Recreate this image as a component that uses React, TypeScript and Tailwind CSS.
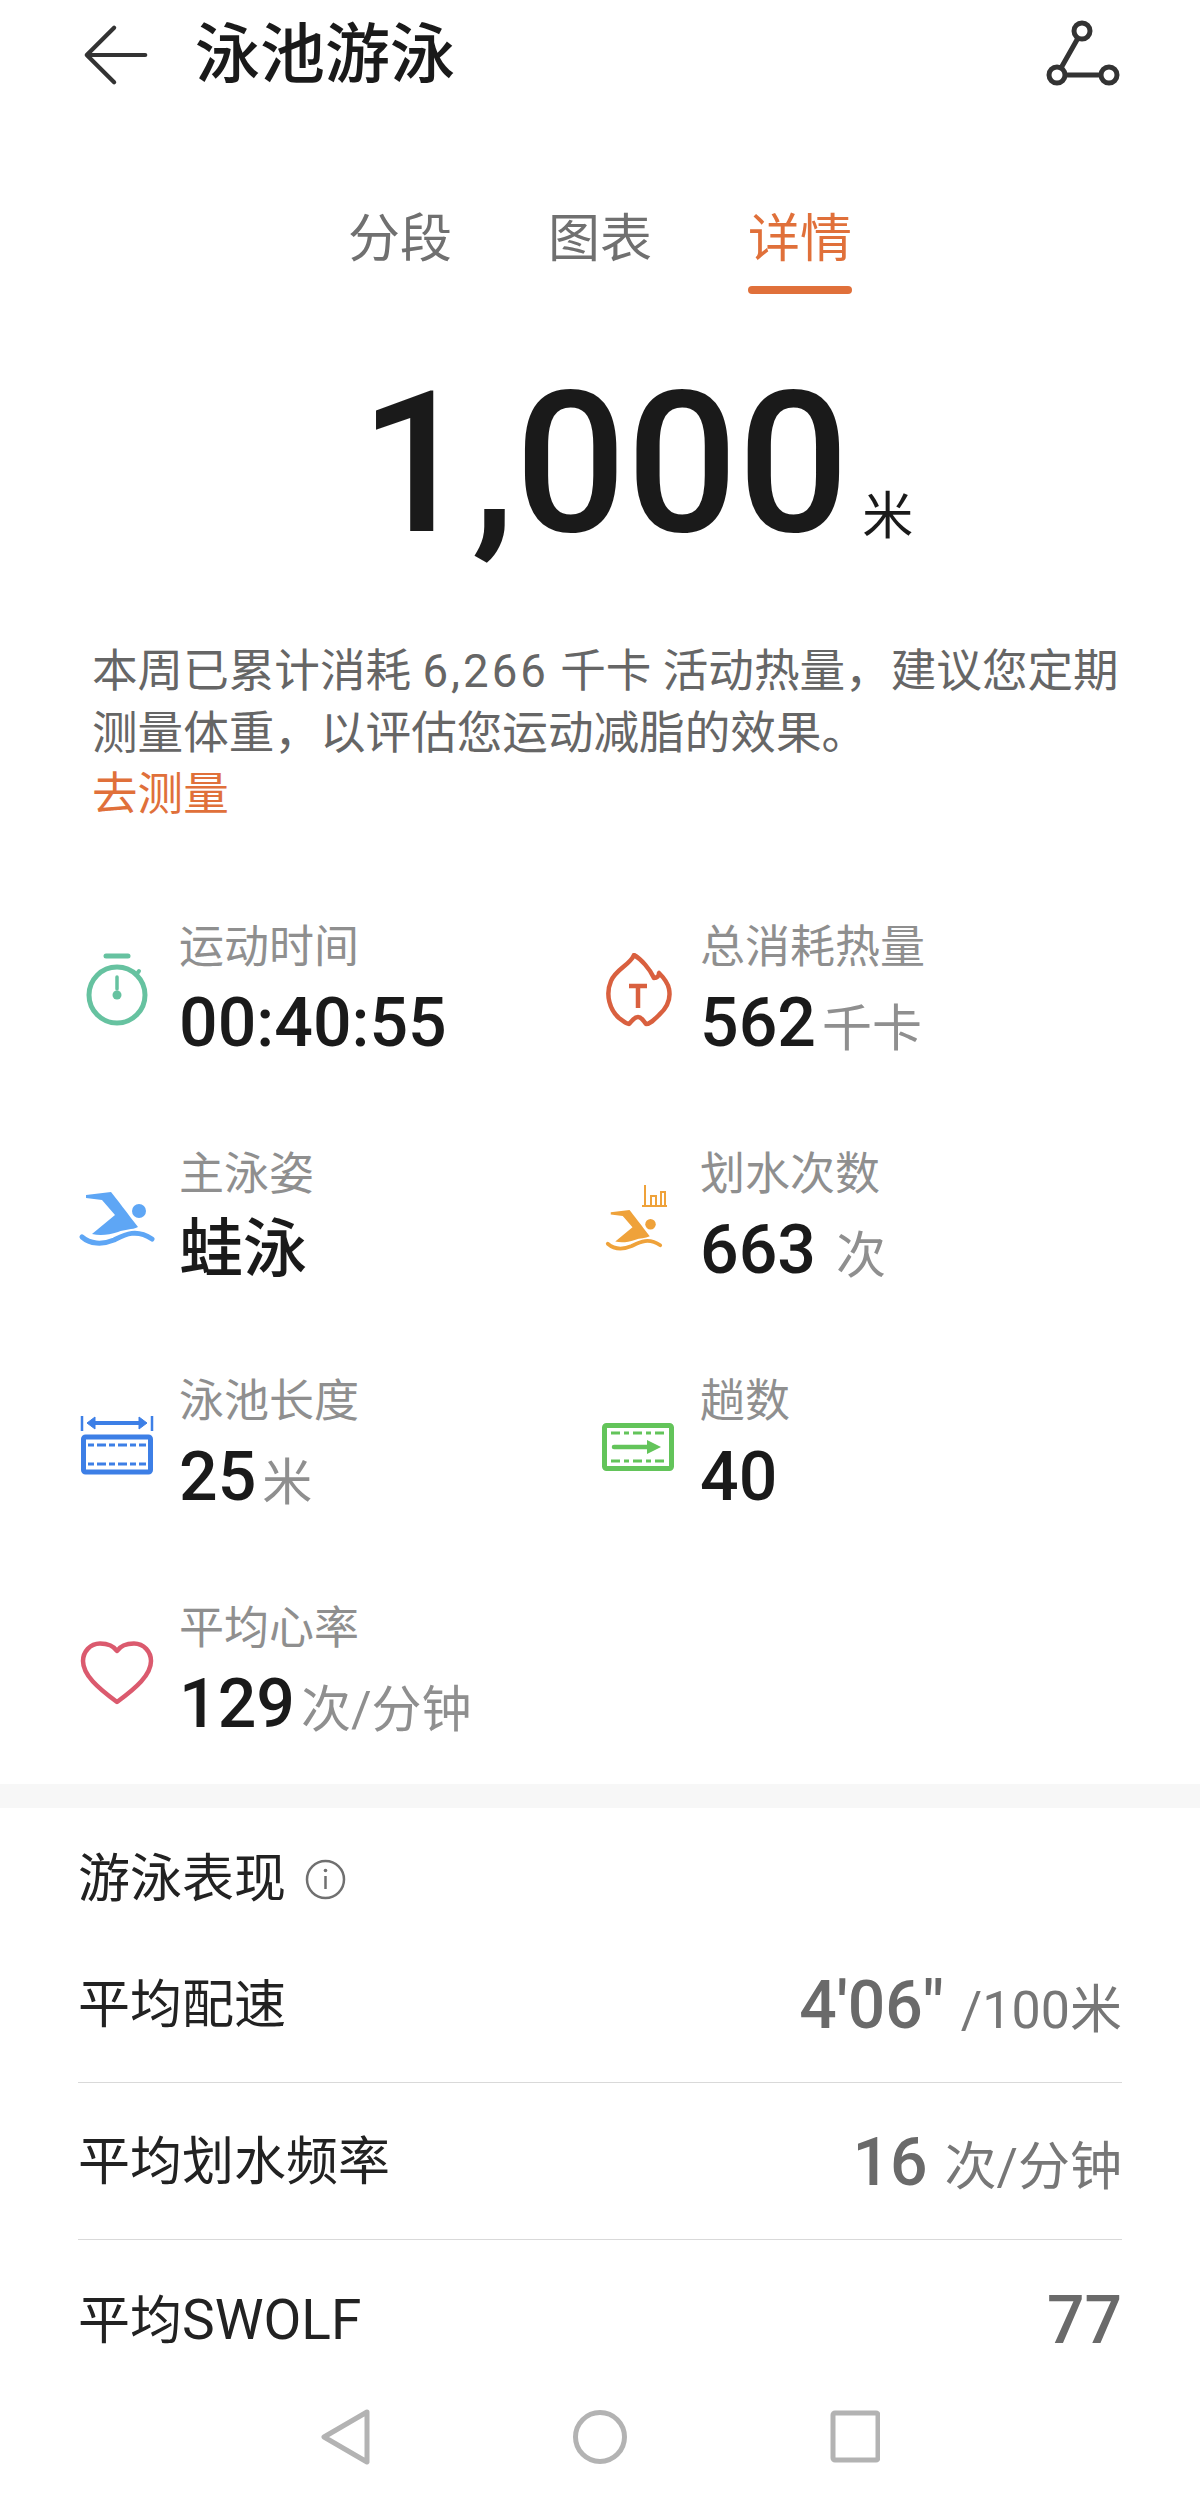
const CJK = "font-['Roboto','Noto_Sans_CJK_SC',sans-serif]";

function Stopwatch() {
  return (
    <svg width="78" height="80" viewBox="0 0 78 80" fill="none" stroke="#66c2a0" strokeWidth="5" strokeLinecap="round">
      <path d="M28 3H50" strokeWidth="5" />
      <circle cx="39" cy="42" r="28" />
      <path d="M58 22L61 18" strokeWidth="4" />
      <path d="M39 24V36" strokeWidth="3.5" />
      <circle cx="39" cy="42" r="4.5" fill="#66c2a0" stroke="none" />
    </svg>
  );
}
function Flame() {
  return (
    <svg width="78" height="80" viewBox="0 0 78 80" fill="none" stroke="#d9603f" strokeWidth="4.5" strokeLinejoin="round">
      <path d="M35 2C31 12 17 16 12 28C6 42 11 57 20 65C24 68 27 71 30 71C33 68 35 64 39 64C43 64 45 69 47 71C51 71 55 67 60 62C69 54 72 46 70 36C69 30 65 25 60 20C60 23 58 25 55 25C51 16 42 6 35 2Z" />
      <path d="M30 33H48M39 33V55" strokeWidth="4.5" />
    </svg>
  );
}
function SwimmerShape({ color, wave }: { color: string; wave: number }) {
  return (
    <>
      <path d="M8 15L33 12C38 18 50 34 60 47C54 50 47 49 40 52C31 55 22 56 14 54L37 35L24 20L8 18Z" fill={color} />
      <circle cx="61" cy="31" r="7" fill={color} />
      <path d="M4 57C12 64 24 65 36 60C46 55 58 48 74 59" stroke={color} strokeWidth={wave} strokeLinecap="round" fill="none" />
    </>
  );
}
function SwimBlue() {
  return (
    <svg width="78" height="80" viewBox="0 0 78 80">
      <SwimmerShape color="#5ea6f5" wave={5} />
    </svg>
  );
}
function SwimOrange() {
  return (
    <svg width="78" height="80" viewBox="0 0 78 80">
      <g transform="translate(5.75 21) scale(.75)">
        <SwimmerShape color="#efa23a" wave={5} />
      </g>
      <path d="M43 26H68M46 26V5M52 26V16H57V26M62 26V12H66V26" stroke="#efa23a" strokeWidth="2" fill="none" />
    </svg>
  );
}
function Pool() {
  return (
    <svg width="78" height="80" viewBox="0 0 78 80" fill="none" stroke="#3d7fe6">
      <path d="M4 9V24M74 9V24" strokeWidth="2.5" />
      <path d="M14 16H64" strokeWidth="4" />
      <path d="M9 16L17 10V22ZM69 16L61 10V22Z" fill="#3d7fe6" strokeWidth="1" />
      <rect x="5.5" y="30" width="67" height="35" rx="2" strokeWidth="5" />
      <path d="M10 38H68M10 57H68" strokeWidth="3" strokeDasharray="6 3 9 3" />
    </svg>
  );
}
function Laps() {
  return (
    <svg width="78" height="80" viewBox="0 0 78 80" fill="none" stroke="#63c45a">
      <rect x="5.5" y="18.5" width="67" height="43" rx="2" strokeWidth="5" />
      <path d="M12 26H66M12 54H66" strokeWidth="3" strokeDasharray="9 4 5 4" />
      <path d="M15 40H50" strokeWidth="4.5" strokeLinecap="round" />
      <path d="M48 33L62 40L48 47Z" fill="#63c45a" stroke="none" />
    </svg>
  );
}
function Heart() {
  return (
    <svg width="78" height="80" viewBox="0 0 78 80" fill="none" stroke="#db5a6e" strokeWidth="4.5" strokeLinejoin="round">
      <path d="M39 17C35 11 29 9.5 22 9.5C12 9.5 5 18 5 27C5 41 20 54 39 68C58 54 73 41 73 27C73 18 66 9.5 56 9.5C49 9.5 43 11 39 17Z" />
    </svg>
  );
}

function Stat({ icon, label, value, unit, gap = "ml-[6px]", cjk }: { icon: React.ReactNode; label: string; value: string; unit?: string; gap?: string; cjk?: boolean }) {
  return (
    <div className="flex h-[227px] items-center">
      <div className="w-[78px] shrink-0">{icon}</div>
      <div className="ml-[23px] flex flex-col">
        <div className="h-[60px] text-[45px] leading-[60px] text-[#8f8f8f]">{label}</div>
        <div className="flex h-[90px] items-baseline leading-[90px] whitespace-nowrap">
          <span className={cjk ? "text-[64px] font-medium text-[#1a1a1a]" : "text-[68px] font-medium text-[#1a1a1a]"}>{value}</span>
          {unit ? <span className={`${gap} text-[50px] text-[#8f8f8f]`}>{unit}</span> : null}
        </div>
      </div>
    </div>
  );
}

function Row({ label, value, unit, border }: { label: React.ReactNode; value: string; unit?: string; border?: boolean }) {
  return (
    <div className={`flex h-[157px] items-center justify-between pt-[4px] ${border ? "border-b border-[#d9d9d9]" : ""}`}>
      <span className="text-[52px] text-[#222222]">{label}</span>
      <span className="flex items-baseline whitespace-nowrap">
        <span className="text-[66px] font-medium text-[#6a6a6a]">{value}</span>
        {unit ? <span className="ml-[17px] text-[52px] text-[#777777]">{unit}</span> : null}
      </span>
    </div>
  );
}

export default function App() {
  return (
    <div className={`relative h-[2502px] w-[1200px] overflow-hidden bg-white ${CJK}`}>
      <header className="flex h-[110px] items-center justify-between pr-[78px] pl-[83px]">
        <div className="flex items-center">
          <svg width="66" height="62" viewBox="0 0 70 64" fill="none" stroke="#333333" strokeWidth="4.5" strokeLinecap="round" strokeLinejoin="round">
            <path d="M33 3L4 32L33 61M4 32H66" />
          </svg>
          <h1 className="ml-[46px] text-[65px] leading-[80px] font-medium text-[#1a1a1a]">泳池游泳</h1>
        </div>
        <svg width="76" height="70" viewBox="0 0 76 70" fill="none" stroke="#333333" strokeWidth="5">
          <circle cx="36" cy="11" r="8" />
          <circle cx="11" cy="55" r="8" />
          <circle cx="63" cy="55" r="8" />
          <path d="M32 18L15 48M19 55H55" />
        </svg>
      </header>

      <nav className="mt-[90px] flex justify-center gap-[96px] text-[52px] leading-[80px]">
        <div className="text-[#707070]">分段</div>
        <div className="text-[#707070]">图表</div>
        <div className="flex flex-col items-center">
          <span className="text-[#e0703a]">详情</span>
          <span className="mt-[6px] h-[8px] w-[104px] rounded-full bg-[#e0703a]" />
        </div>
      </nav>

      <div className="mt-[50px] flex h-[240px] items-baseline justify-center pl-[73px] leading-[240px] text-[#1a1a1a]">
        <span className="text-[196px] font-medium">1,000</span>
        <span className="ml-[13px] translate-y-[3px] text-[51px]">米</span>
      </div>

      <p className="mt-[57px] pl-[92px] text-[45.6px] leading-[61.5px] text-[#666666]">
        本周已累计消耗 <span className="tracking-[3px]">6,266</span> 千卡 活动热量，建议您定期
        <br />
        测量体重，以评估您运动减脂的效果。
        <br />
        <span className="text-[#e0703a]">去测量</span>
      </p>

      <section className="mt-[54px] mb-[-4px] grid grid-cols-[521px_1fr] pl-[78px]">
        <Stat icon={<Stopwatch />} label="运动时间" value="00:40:55" />
        <Stat icon={<Flame />} label="总消耗热量" value="562" unit="千卡" />
        <Stat icon={<SwimBlue />} label="主泳姿" value="蛙泳" cjk />
        <Stat icon={<SwimOrange />} label="划水次数" value="663" unit="次" gap="ml-[20px]" />
        <Stat icon={<Pool />} label="泳池长度" value="25" unit="米" />
        <Stat icon={<Laps />} label="趟数" value="40" />
        <Stat icon={<Heart />} label="平均心率" value="129" unit="次/分钟" />
      </section>

      <div className="h-[24px] bg-[#f7f7f7]" />

      <section className="px-[78px]">
        <div className="flex h-[118px] items-center pt-[26px]">
          <span className="text-[52px] leading-[60px] text-[#222222]">游泳表现</span>
          <svg className="ml-[19px]" width="41" height="41" viewBox="0 0 41 41" fill="none" stroke="#707070" strokeWidth="2.5">
            <circle cx="20.5" cy="20.5" r="18.5" />
            <path d="M20.5 17V30" />
            <circle cx="20.5" cy="11.5" r="1.8" fill="#707070" stroke="none" />
          </svg>
        </div>
        <Row label="平均配速" value={"4'06\""} unit="/100米" border />
        <Row label="平均划水频率" value="16" unit="次/分钟" border />
        <Row label={<>平均<span className="text-[55px]">SWOLF</span></>} value="77" />
      </section>

      <div className="flex h-[105px] items-start justify-center pt-[12px]">
        <svg width="560" height="56" viewBox="0 0 560 56" fill="none" stroke="#b3b3b3" strokeWidth="5" strokeLinejoin="round">
          <path d="M47 3L4 28L47 53Z" />
          <circle cx="280" cy="28" r="24.5" />
          <rect x="513" y="4" width="45" height="47" rx="2" />
        </svg>
      </div>
    </div>
  );
}
